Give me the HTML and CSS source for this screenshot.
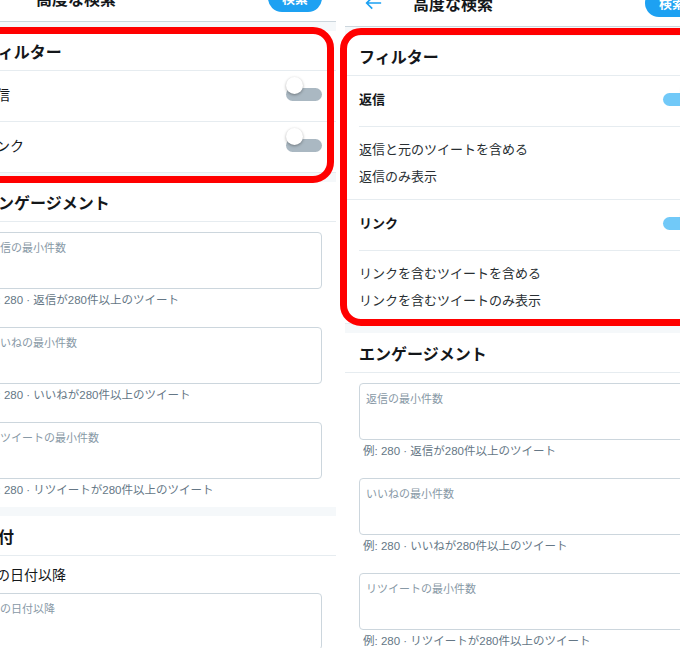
FILE: index.html
```html
<!DOCTYPE html>
<html lang="ja">
  <head>
    <meta charset="UTF-8" />
    <meta name="viewport" content="width=device-width, initial-scale=1.0" />
    <title>高度な検索</title>
    <link rel="stylesheet" href="styles.css">
  </head>
  <body>
    <div class="screens">
      <!-- filters switched off -->
      <section class="screen screen-off">
        <header class="topbar">
          <svg class="back" viewBox="0 0 20 16"><path d="M19 8H2M8.5 1.5L2 8l6.5 6.5" /></svg>
          <h1 class="title">高度な検索</h1>
          <button class="search-btn">検索</button>
        </header>
        <div class="block filters">
          <div class="mark"></div>
          <h2 class="block-title">フィルター</h2>
          <div class="group">
            <div class="toggle-row"><span>返信</span><span class="switch"></span></div>
          </div>
          <div class="group">
            <div class="toggle-row"><span>リンク</span><span class="switch"></span></div>
          </div>
        </div>
        <div class="block">
          <h2 class="block-title">エンゲージメント</h2>
          <div class="fields">
            <div class="field">
              <textarea placeholder="返信の最小件数"></textarea>
              <p class="hint">例: 280 · 返信が280件以上のツイート</p>
            </div>
            <div class="field">
              <textarea placeholder="いいねの最小件数"></textarea>
              <p class="hint">例: 280 · いいねが280件以上のツイート</p>
            </div>
            <div class="field">
              <textarea placeholder="リツイートの最小件数"></textarea>
              <p class="hint">例: 280 · リツイートが280件以上のツイート</p>
            </div>
          </div>
        </div>
        <div class="block">
          <h2 class="block-title">日付</h2>
          <div class="date">
            <p class="date-label">この日付以降</p>
            <textarea placeholder="この日付以降"></textarea>
          </div>
        </div>
      </section>

      <!-- filters switched on -->
      <section class="screen screen-on">
        <header class="topbar">
          <svg class="back" viewBox="0 0 20 16"><path d="M19 8H2M8.5 1.5L2 8l6.5 6.5" /></svg>
          <h1 class="title">高度な検索</h1>
          <button class="search-btn">検索</button>
        </header>
        <div class="block filters">
          <div class="mark"></div>
          <h2 class="block-title">フィルター</h2>
          <div class="group">
            <div class="toggle-row"><span>返信</span><span class="switch on"></span></div>
            <div class="options">
              <p>返信と元のツイートを含める</p>
              <p>返信のみ表示</p>
            </div>
          </div>
          <div class="group">
            <div class="toggle-row"><span>リンク</span><span class="switch on"></span></div>
            <div class="options">
              <p>リンクを含むツイートを含める</p>
              <p>リンクを含むツイートのみ表示</p>
            </div>
          </div>
        </div>
        <div class="block">
          <h2 class="block-title">エンゲージメント</h2>
          <div class="fields">
            <div class="field">
              <textarea placeholder="返信の最小件数"></textarea>
              <p class="hint">例: 280 · 返信が280件以上のツイート</p>
            </div>
            <div class="field">
              <textarea placeholder="いいねの最小件数"></textarea>
              <p class="hint">例: 280 · いいねが280件以上のツイート</p>
            </div>
            <div class="field">
              <textarea placeholder="リツイートの最小件数"></textarea>
              <p class="hint">例: 280 · リツイートが280件以上のツイート</p>
            </div>
          </div>
        </div>
      </section>
    </div>
  </body>
</html>
```

FILE: styles.css
```css
*{
    margin: 0;
    padding: 0;
    box-sizing: border-box;
}
body{
    background-color: #ffffff;
    color: #14171a;
    font-family: "Liberation Sans", "Noto Sans CJK JP", sans-serif;
    overflow: hidden;
}
.screens{
    display: flex;
    align-items: flex-start;
    gap: 9px;
    margin-left: -32px;
}
.screen{
    position: relative;
    width: 368px;
    flex-shrink: 0;
}
.screen-off{
    margin-top: -26px;
}
.screen-on{
    margin-top: -21px;
}

/* top bar */
.topbar{
    height: 48px;
    display: flex;
    align-items: center;
    padding: 0 14px 0 20px;
    border-bottom: 1px solid #ccd6dd;
}
.back{
    width: 17px;
    height: 14px;
    margin-right: 31px;
    fill: none;
    stroke: #1da1f2;
    stroke-width: 2;
}
.title{
    flex: 1;
    font-size: 16px;
    font-weight: bold;
}
.search-btn{
    height: 28px;
    padding: 0 14px;
    border: none;
    border-radius: 14px;
    background-color: #1da1f2;
    color: white;
    font-family: inherit;
    font-size: 13px;
    font-weight: bold;
}

/* sections */
.block{
    position: relative;
    border-top: 9px solid #f5f8fa;
}
.block-title{
    height: 40px;
    display: flex;
    align-items: center;
    padding: 0 14px;
    font-size: 16px;
    font-weight: bold;
    border-bottom: 1px solid #e6ecf0;
}

/* red frame round the filters */
.mark{
    position: absolute;
    border: 7px solid #ff0000;
    border-radius: 21px;
    pointer-events: none;
    z-index: 2;
}
.screen-off .mark{
    top: -4px;
    bottom: -10px;
    left: 2px;
    right: 2px;
}
.screen-on .mark{
    top: -8px;
    bottom: -2px;
    left: -5px;
    right: -5px;
}

/* filter rows */
.group{
    border-bottom: 1px solid #e6ecf0;
}
.toggle-row{
    height: 50px;
    display: flex;
    align-items: center;
    justify-content: space-between;
    padding: 0 14px 5px;
    font-size: 13px;
    font-weight: bold;
}
.screen-off .toggle-row{
    font-size: 14px;
    font-weight: normal;
}
.switch{
    position: relative;
    width: 36px;
    height: 13px;
    margin-top: 1px;
    border-radius: 7px;
    background-color: #aab8c2;
}
.switch::after{
    content: "";
    position: absolute;
    left: 0;
    top: -11px;
    width: 17px;
    height: 17px;
    border-radius: 50%;
    background-color: white;
    box-shadow: 0 1px 3px rgba(0, 0, 0, 0.35);
}
.switch.on{
    background-color: #71c9f8;
}
.switch.on::after{
    left: 19px;
}
.options{
    margin-left: 14px;
    padding: 9px 14px 9px 0;
    border-top: 1px solid #e6ecf0;
    font-size: 13px;
    line-height: 27px;
    color: #292f33;
}

/* number fields */
.fields{
    display: flex;
    flex-direction: column;
    gap: 20px;
    padding: 10px 14px;
}
textarea{
    display: block;
    width: 100%;
    height: 57px;
    padding: 8px 6px;
    border: 1px solid #ccd6dd;
    border-radius: 4px;
    resize: none;
    font-family: inherit;
    font-size: 11px;
    line-height: 14px;
}
textarea::placeholder{
    color: #8899a6;
}
.hint{
    margin-top: 4px;
    padding-left: 4px;
    font-size: 11.5px;
    line-height: 14px;
    color: #657786;
}

/* date */
.date{
    padding: 11px 14px 0;
}
.date-label{
    font-size: 14px;
    line-height: 17px;
    margin-bottom: 9px;
}
```
